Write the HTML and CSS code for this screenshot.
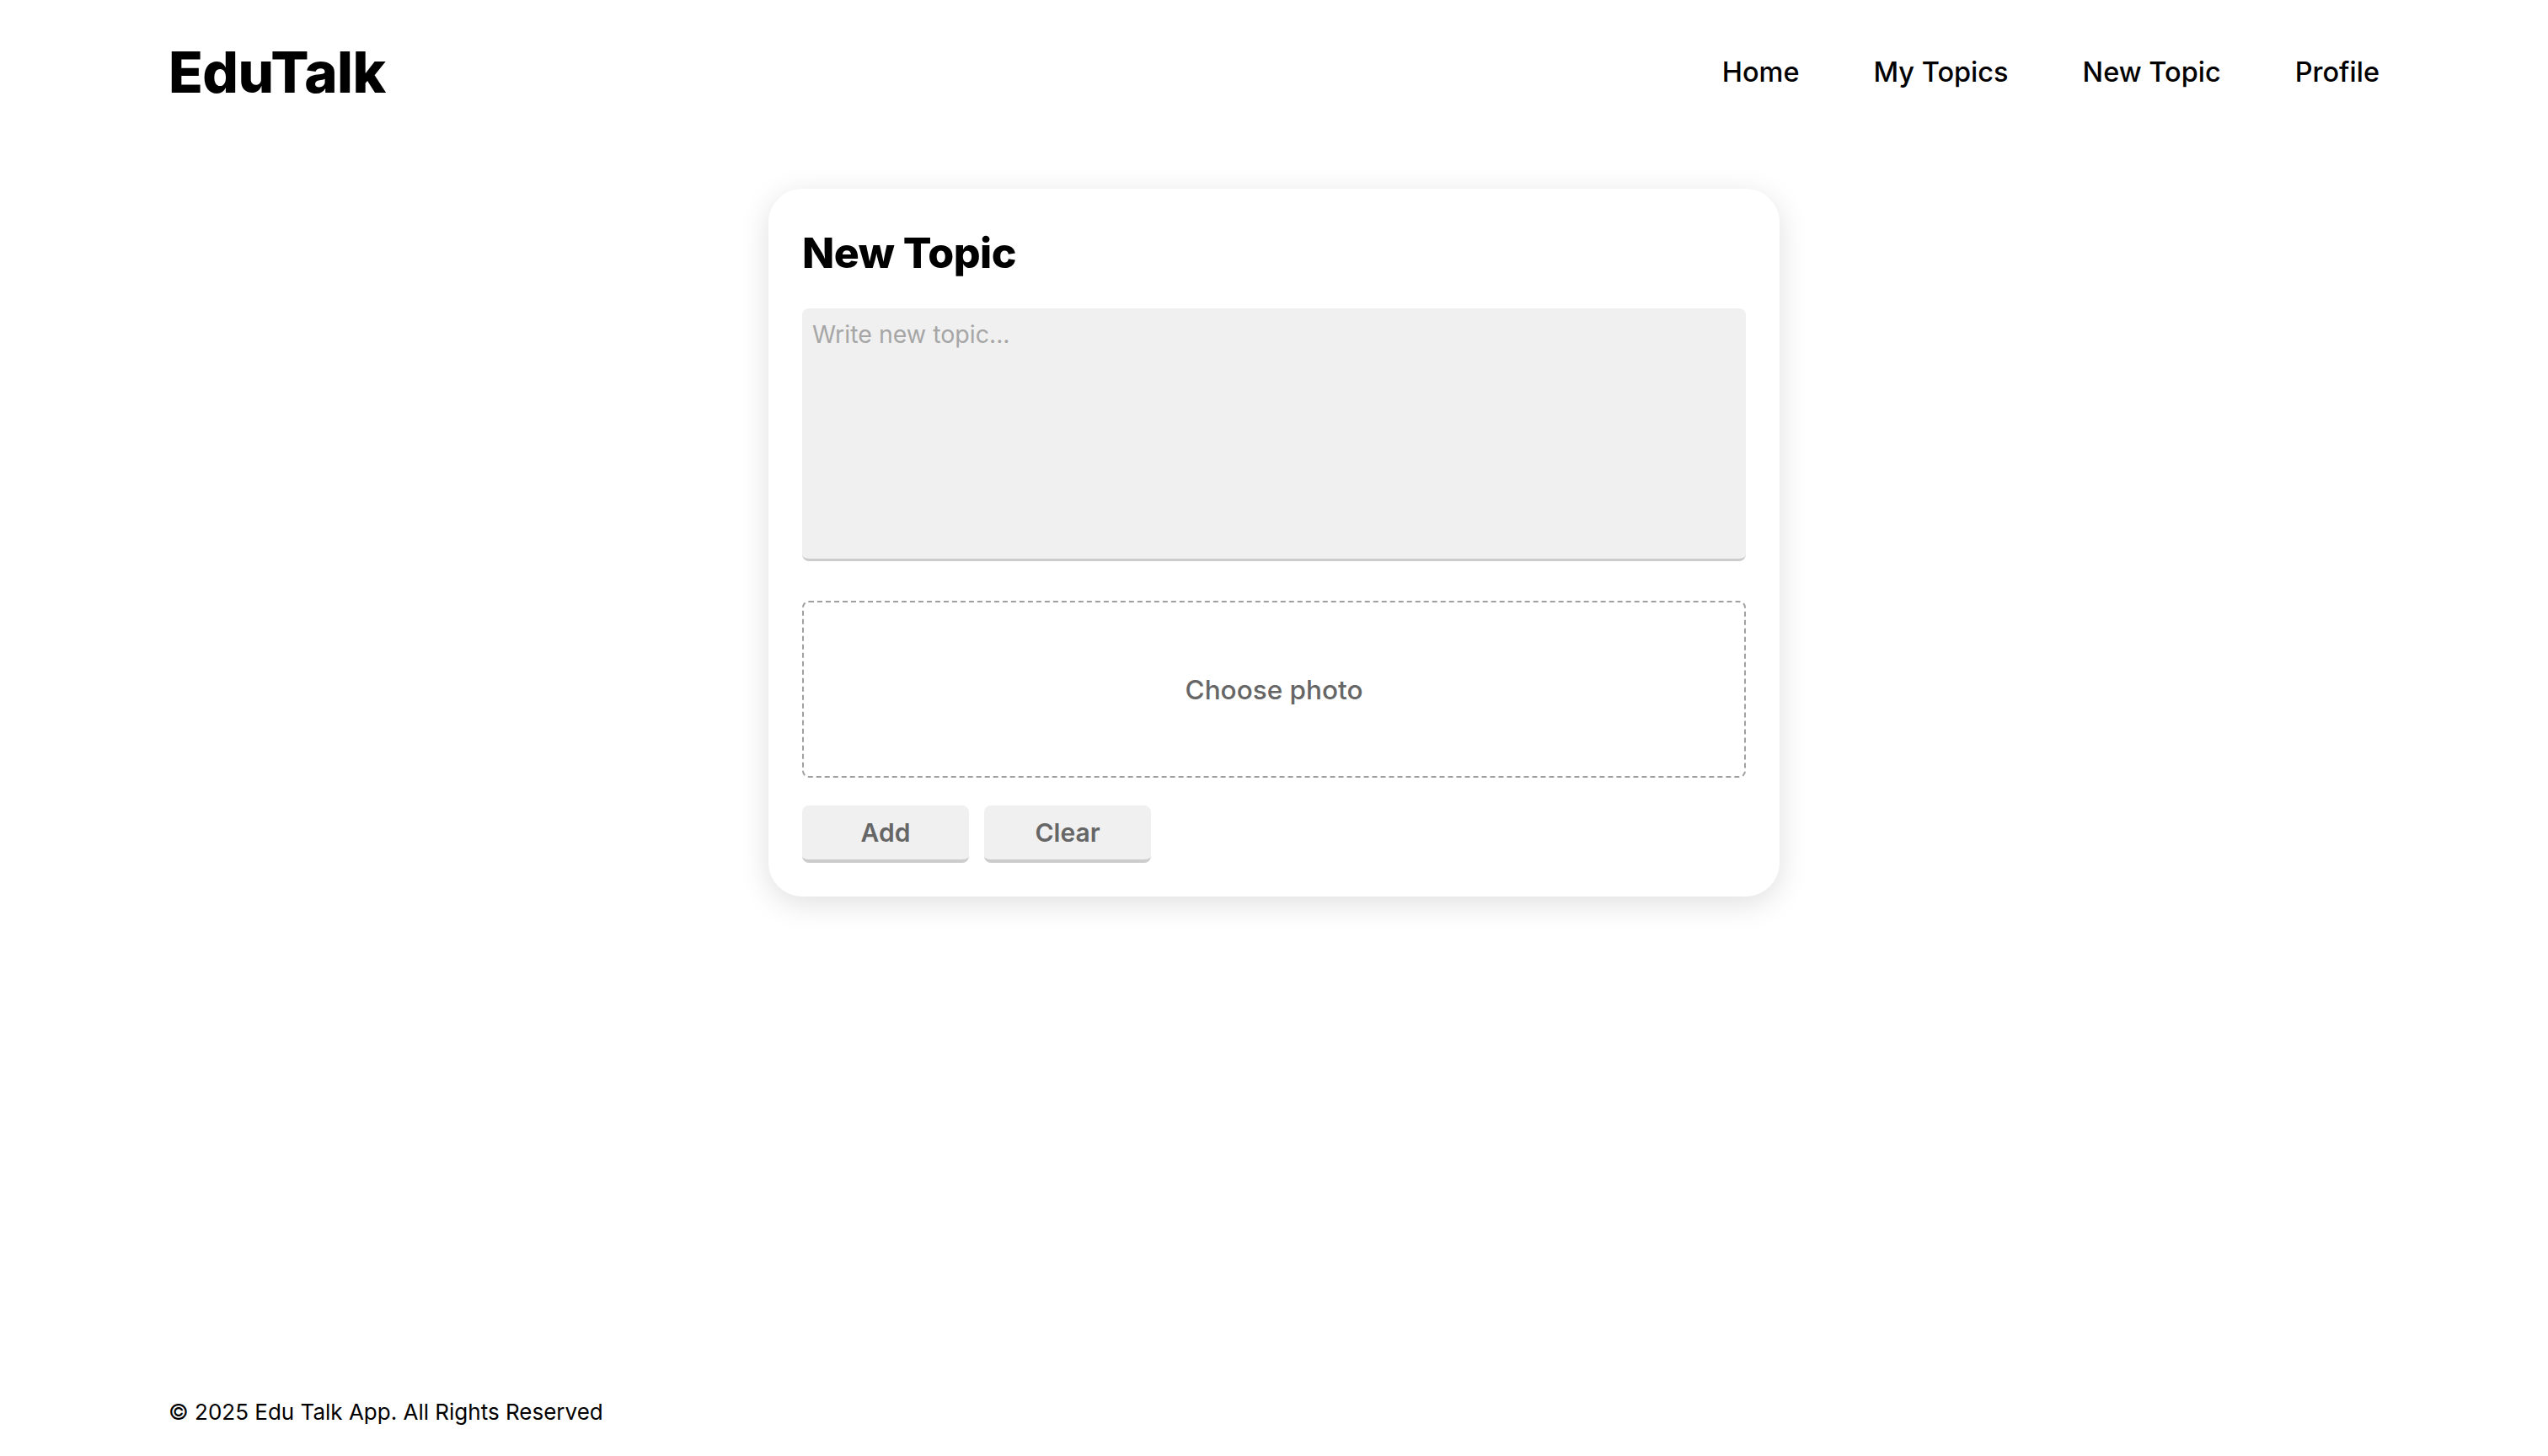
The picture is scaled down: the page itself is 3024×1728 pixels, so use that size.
FILE: index.html
```html
<!DOCTYPE html>
<html lang="en">
<head>
<meta charset="utf-8">
<title>EduTalk - New Topic</title>
<link rel="stylesheet" href="styles.css">
</head>
<body>
<header class="site-header">
  <div class="logo">EduTalk</div>
  <nav class="nav">
    <a class="nav-link" href="#">Home</a>
    <a class="nav-link" href="#">My Topics</a>
    <a class="nav-link" href="#">New Topic</a>
    <a class="nav-link" href="#">Profile</a>
  </nav>
</header>
<main class="main">
  <section class="card">
    <h2 class="card-title">New Topic</h2>
    <textarea class="topic-input" placeholder="Write new topic..."></textarea>
    <label class="photo-drop">Choose photo</label>
    <div class="actions">
      <button class="btn">Add</button>
      <button class="btn">Clear</button>
    </div>
  </section>
</main>
<footer class="site-footer">© 2025 Edu Talk App. All Rights Reserved</footer>
</body>
</html>
```

FILE: styles.css
```css
* { box-sizing: border-box; }
html, body { margin: 0; padding: 0; }
body {
  font-family: Inter, "Open Sans", "Liberation Sans", sans-serif;
  color: #000;
  background: #fff;
  min-height: 100vh;
  display: flex;
  flex-direction: column;
}
.site-header {
  height: 170px;
  padding: 0 200px;
  display: flex;
  align-items: center;
  justify-content: space-between;
}
.logo {
  font-size: 67px;
  font-weight: 800;
  letter-spacing: -0.5px;
  line-height: 1;
}
.nav {
  display: flex;
  gap: 88px;
}
.nav-link {
  color: #000;
  text-decoration: none;
  font-size: 32.5px;
  font-weight: 500;
}
.main {
  flex: 1;
  display: flex;
  justify-content: center;
  align-items: flex-start;
  padding-top: 54px;
}
.card {
  width: 1200px;
  padding: 40px;
  background: #fff;
  border-radius: 40px;
  box-shadow: 0 8px 36px rgba(0, 0, 0, 0.13);
  display: flex;
  flex-direction: column;
}
.card-title {
  margin: 0 0 30px;
  font-size: 50px;
  line-height: 72px;
  font-weight: 800;
  letter-spacing: -0.5px;
}
.topic-input {
  display: block;
  width: 100%;
  height: 300px;
  resize: none;
  border: none;
  border-bottom: 3px solid #cccccc;
  border-radius: 8px;
  background: #f0f0f0;
  padding: 13px 12px;
  font-family: inherit;
  font-size: 28.5px;
  color: #333;
  outline: none;
}
.topic-input::placeholder { color: #a6a6a6; }
.photo-drop {
  margin-top: 47px;
  height: 210px;
  border: 2px dashed #a0a0a0;
  border-radius: 8px;
  display: flex;
  align-items: center;
  justify-content: center;
  color: #666;
  font-size: 31.5px;
  font-weight: 500;
}
.actions {
  margin-top: 33px;
  display: flex;
  gap: 18px;
}
.btn {
  width: 198px;
  height: 68px;
  border: none;
  border-bottom: 4px solid #cccccc;
  border-radius: 8px;
  background: #f0f0f0;
  color: #666;
  font-family: inherit;
  font-size: 30px;
  font-weight: 600;
  padding: 0;
}
.site-footer {
  padding: 0 200px 31px;
  font-size: 26px;
  line-height: 42px;
}
```
